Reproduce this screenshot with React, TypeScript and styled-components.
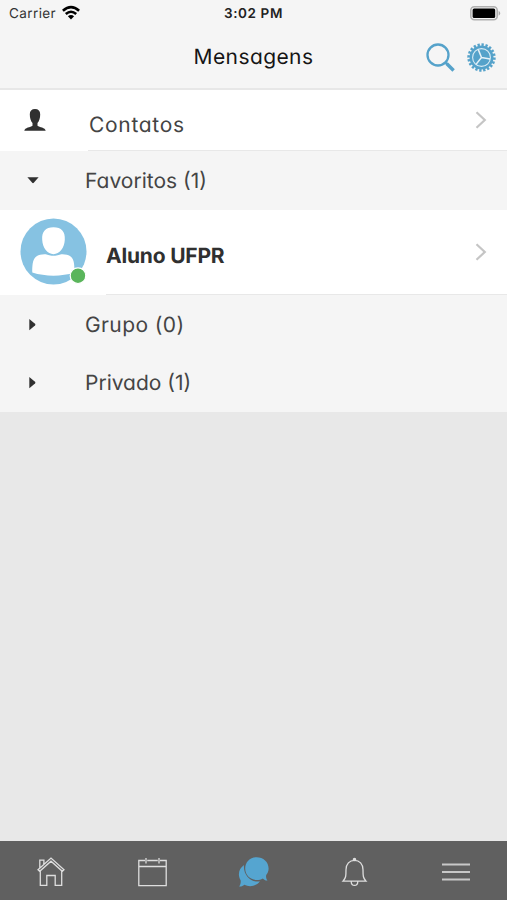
import React from "react";
import styled, { createGlobalStyle } from "styled-components";

const Global = createGlobalStyle`
  * { box-sizing: border-box; }
  body { margin: 0; background: #e8e8e8; }
  svg { display: block; flex: none; overflow: visible; }
`;

const Screen = styled.div`
  display: flex;
  flex-direction: column;
  width: 507px;
  height: 900px;
  overflow: hidden;
  background: #e8e8e8;
  color: #3a3a3a;
  font-family: Inter, "Open Sans", sans-serif;
  font-feature-settings: "cv11";
  text-rendering: geometricPrecision;
`;

const StatusBar = styled.div`
  display: grid;
  grid-template-columns: 1fr auto 1fr;
  align-items: center;
  height: 27px;
  padding: 0 6px 0 9px;
  background: #f5f5f5;
  color: #222;
  font-size: 13.5px;
  font-feature-settings: normal;
`;

const Carrier = styled.div`
  display: flex;
  align-items: center;
  gap: 6px;
  padding-top: 1px;
  color: #333;
  letter-spacing: 0.4px;

  svg {
    margin-top: -2px;
  }
`;

const Clock = styled.div`
  padding: 1px 3px 0 0;
  font-weight: 600;
  font-size: 13.5px;
  letter-spacing: 0.6px;
`;

const Battery = styled.div`
  display: flex;
  justify-content: flex-end;
`;

const Header = styled.header`
  display: grid;
  grid-template-columns: 1fr auto 1fr;
  align-items: center;
  height: 63px;
  padding: 0 11px;
  background: #f5f5f5;
  border-bottom: 2px solid #e7e7e7;
`;

const Title = styled.h1<{ $spacing: number }>`
  grid-column: 2;
  margin: 0;
  color: #151515;
  font-size: 21px;
  font-weight: 400;
  line-height: 60px;
  letter-spacing: ${(p) => p.$spacing}px;
`;

const Actions = styled.div`
  display: flex;
  justify-content: flex-end;
  align-items: center;
  gap: 12px;
`;

const Row = styled.div<{ $height: number; $inset: number }>`
  display: flex;
  align-items: center;
  height: ${(p) => p.$height}px;
  padding: 0 20px 2px 0;
  background: linear-gradient(#e8e8e8, #e8e8e8) ${(p) => p.$inset}px 100% / 100% 1px no-repeat #fff;
`;

const Section = styled.div<{ $height: number }>`
  display: flex;
  align-items: center;
  height: ${(p) => p.$height}px;
  background: #f5f5f5;
`;

const Leading = styled.div<{ $width: number; $pad: number }>`
  flex: none;
  width: ${(p) => p.$width}px;
  padding-left: ${(p) => p.$pad}px;
`;

const Label = styled.div<{ $bold?: boolean; $drop?: number; $spacing?: number }>`
  flex: 1;
  padding-top: ${(p) => p.$drop ?? 0}px;
  color: ${(p) => (p.$bold ? "#303030" : "#444")};
  font-size: 21px;
  font-weight: ${(p) => (p.$bold ? 700 : 400)};
  line-height: 30px;
  letter-spacing: ${(p) => p.$spacing ?? 0}px;
`;

const TabBar = styled.nav`
  display: grid;
  grid-template-columns: repeat(5, 1fr);
  align-items: center;
  justify-items: center;
  height: 59px;
  margin-top: auto;
  padding-top: 3px;
  background: #606060;
`;

const Chevron = () => (
  <svg width="12" height="18" viewBox="0 0 12 18" fill="none" stroke="#c5c5c5" strokeWidth="2.2">
    <path d="M1.5 1.2 9.8 9 1.5 16.8" />
  </svg>
);

const Wifi = () => (
  <svg width="18" height="14" viewBox="0 0 18 14" fill="none" stroke="#000" strokeWidth="2.6">
    <path d="M.9 4.8Q9-2.4 17.1 4.8M3.8 8Q9 3.5 14.2 8" />
    <path d="M9 13.4 5.9 10.3Q9 7.8 12.1 10.3Z" fill="#000" stroke="none" />
  </svg>
);

const BatteryIcon = () => (
  <svg width="31" height="15" viewBox="0 0 31 15">
    <rect x=".8" y=".8" width="26.4" height="13" rx="3.5" fill="#f5f5f5" stroke="#b0b0b0" strokeWidth="1.6" />
    <rect x="2.6" y="2.6" width="22.6" height="9.5" rx="1.5" />
    <path d="M28.6 4.8Q32 7.3 28.6 9.8Z" fill="#aaa" />
  </svg>
);

const Search = () => (
  <svg width="29" height="29" viewBox="0 0 29 29" fill="none" stroke="#55a2ca">
    <circle cx="12" cy="12" r="10.5" strokeWidth="2.3" />
    <path d="m19.5 19.5 1.6 1.6" strokeWidth="2.3" />
    <path d="m20.6 20.6 7 7" strokeWidth="3.5" />
  </svg>
);

const Gear = () => (
  <svg width="29" height="29" viewBox="0 0 29 29" fill="none">
    <circle cx="14.5" cy="14.5" r="12.7" stroke="#55a2ca" strokeWidth="3" pathLength="40" strokeDasharray="1.15 .85" />
    <circle cx="14.5" cy="14.5" r="12" fill="#55a2ca" />
    <circle cx="14.5" cy="14.5" r="8.9" stroke="#d9ebf4" strokeWidth="1.1" />
    <path d="M14.5 14.5 11.2 6.4M14.5 14.5l8.6 1.4M14.5 14.5 9 21.4" stroke="#e5f1f7" strokeWidth="1.5" />
  </svg>
);

const Person = () => (
  <svg width="22" height="22" viewBox="0 0 22 22" fill="#303030">
    <path d="M11 0C7.6 0 5.8 2 5.8 5.2c0 3.7 1 6.9 2.7 8.9v2.6C6.6 18.3.6 18.4.3 21.8h21.4c-.3-3.4-6.3-3.5-8.2-5.1v-2.6c1.7-2 2.7-5.2 2.7-8.9C16.2 2 14.4 0 11 0Z" />
  </svg>
);

const Avatar = () => (
  <svg width="67" height="67" viewBox="0 0 67 67">
    <circle cx="33.5" cy="33.5" r="33" fill="#86c2e2" />
    <path d="M33.5 9.3c8 0 11.8 4.3 11.3 12.5-.4 8.3-5.3 14.4-11.3 14.4s-10.9-6.1-11.3-14.4C21.7 13.6 25.5 9.3 33.5 9.3Z" fill="#fff" />
    <path d="M12.3 54.5c0-12 1-18 12.2-18.3 3.2 0 4 1.6 9 1.6s5.8-1.6 9-1.6c11.2.3 12 6.3 12 18.3-13 4.2-29 4.2-42.2 0Z" fill="#fff" />
    <circle cx="58" cy="57.7" r="7.8" fill="#5ab55b" stroke="#fff" strokeWidth="1.2" />
  </svg>
);

const Caret = ({ open }: { open?: boolean }) => (
  <svg width="13" height="12" viewBox="0 0 13 12" fill="#303030">
    <path d={open ? "M.4 2.3h11.2L6.8 7.8Q6 8.6 5.2 7.8Z" : "M2.3 0v11.2L8 6.5Q8.9 5.6 8 4.7Z"} />
  </svg>
);

const House = () => (
  <svg width="28" height="30" viewBox="0 0 28 30" fill="none" stroke="#dedede" strokeWidth="1.3">
    <path d="M1 12.7 14 1l13 11.7-1.7 1.6L14 4.2 2.7 14.3ZM2.8 10.7V3.2h4.1v4M3.3 14v14.3h6.5V18.5h8.4v9.8h6.5V14" />
  </svg>
);

const Calendar = () => (
  <svg width="29" height="29" viewBox="0 0 29 29" fill="none" stroke="#dedede" strokeWidth="1.3">
    <path d="M7 2.5H.8v25.2h27.4V2.5H22M9.2 2.5h10.6M.8 8.5h27.4M8 0v5.5M21 0v5.5" />
  </svg>
);

const Chat = () => (
  <svg width="31" height="31" viewBox="0 0 31 31" fill="#55a5d0">
    <path d="M6 8C1 11.5-.7 17.6 2.6 23.3 3 25.5 2.4 27.6 1.1 29.5c2 .3 3.8-.4 5.2-1.7 5.5 2.8 12.3 1.3 15.6-3.5C13 26 5 18 6 8Z" />
    <path d="M18.5.3C11.8.3 7.2 5.2 7.2 11.6c0 6.8 5.2 11.4 11.7 11.4 2.2 0 4.2-.5 5.9-1.5 1.3 1.4 2.8 2.1 4.7 2-1.2-1.7-1.7-3.4-1.3-5.5 1.6-1.9 2.4-4 2.4-6.4C30.6 5 25.3.3 18.5.3Z" />
  </svg>
);

const Bell = () => (
  <svg width="25" height="29" viewBox="0 0 25 29" fill="none" stroke="#dedede" strokeWidth="1.3">
    <path d="M1 23.2c3-3.2 3-5.5 3-11.5 0-5.5 3.5-9.4 8.5-9.4s8.5 3.9 8.5 9.4c0 6 0 8.3 3 11.5ZM9.2 23.7c.2 5 6.4 5 6.6 0" />
    <circle cx="12.5" cy="1.6" r="1.1" fill="#dedede" />
  </svg>
);

const Menu = () => (
  <svg width="28" height="18" viewBox="0 0 28 18" fill="none" stroke="#c8c8c8" strokeWidth="1.8">
    <path d="M0 1.5h28M0 9h28M0 16.5h28" />
  </svg>
);

export default function App() {
  return (
    <Screen>
      <Global />
      <StatusBar>
        <Carrier>Carrier <Wifi /></Carrier>
        <Clock>3:02 PM</Clock>
        <Battery><BatteryIcon /></Battery>
      </StatusBar>
      <Header>
        <Title $spacing={0.4}>Mensagens</Title>
        <Actions><Search /><Gear /></Actions>
      </Header>
      <Row $height={61} $inset={88}>
        <Leading $width={89} $pad={24}><Person /></Leading>
        <Label $drop={12} $spacing={0.7}>Contatos</Label>
        <Chevron />
      </Row>
      <Section $height={59}>
        <Leading $width={85} $pad={27}><Caret open /></Leading>
        <Label $drop={2} $spacing={0}>Favoritos (1)</Label>
      </Section>
      <Row $height={85} $inset={106}>
        <Leading $width={106} $pad={20}><Avatar /></Leading>
        <Label $bold $drop={11} $spacing={-0.2}>Aluno UFPR</Label>
        <Chevron />
      </Row>
      <Section $height={59}>
        <Leading $width={85} $pad={27}><Caret /></Leading>
        <Label $drop={2} $spacing={0.4}>Grupo (0)</Label>
      </Section>
      <Section $height={58}>
        <Leading $width={85} $pad={27}><Caret /></Leading>
        <Label $drop={2} $spacing={0}>Privado (1)</Label>
      </Section>
      <TabBar>
        <House /><Calendar /><Chat /><Bell /><Menu />
      </TabBar>
    </Screen>
  );
}
